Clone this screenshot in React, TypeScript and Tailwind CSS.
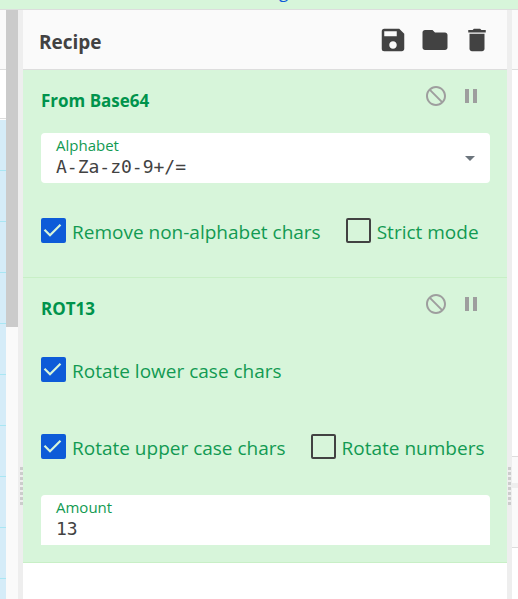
import { useId, type ReactNode } from "react";
import { MdDelete, MdFolder, MdNotInterested, MdPause, MdSave } from "react-icons/md";

function Gutter({ side }: { side: "start" | "end" }) {
  return (
    <div
      className={`flex w-[5px] shrink-0 flex-col bg-[#eeeeee] pt-[457px] ${side === "start" ? "items-end" : "items-center"}`}
    >
      <div className="flex flex-col gap-[2px]">
        {Array.from({ length: 8 }, (_, i) => (
          <span key={i} className="h-[3px] w-[3px] bg-[#cccccc]" />
        ))}
      </div>
    </div>
  );
}

function Checkbox({ label, checked = false }: { label: string; checked?: boolean }) {
  return (
    <label className="flex items-start gap-[6px] pt-[18px] pb-[15px]">
      <span className="grid size-[25px] shrink-0">
        <input
          type="checkbox"
          defaultChecked={checked}
          className="peer col-start-1 row-start-1 size-[25px] appearance-none rounded-[2px] border-2 border-[#424242] checked:border-[#0d5bd8] checked:bg-[#0d5bd8]"
        />
        <svg
          viewBox="0 0 25 25"
          className="pointer-events-none invisible col-start-1 row-start-1 size-[25px] peer-checked:visible"
          fill="none"
          stroke="#d7f5da"
          strokeWidth="2.2"
        >
          <path d="M3.5 11.8 9 17.3 19.5 6.7" />
        </svg>
      </span>
      <span className="pt-[2px] text-[19px] leading-[25px] whitespace-nowrap text-[#129a52]">{label}</span>
    </label>
  );
}

function Field({ label, value, dropdown = false }: { label: string; value: string; dropdown?: boolean }) {
  const id = useId();
  return (
    <div
      className={`mt-[2px] flex h-[50px] w-full bg-white pl-[15px] ${dropdown ? "rounded-[4px]" : "rounded-t-[4px]"}`}
    >
      <div className="flex min-w-0 flex-1 flex-col pt-[2px]">
        <label htmlFor={id} className="text-[15px] leading-[20px] text-[#129a52]">
          {label}
        </label>
        <input
          id={id}
          type="text"
          defaultValue={value}
          className="h-[24px] w-full bg-transparent font-['DejaVu_Sans_Mono',monospace] text-[18px] leading-[24px] text-[#424242] outline-none"
        />
      </div>
      {dropdown && (
        <button type="button" aria-label="Options" className="grid w-[40px] place-items-center">
          <svg viewBox="0 0 10 5" className="h-[5px] w-[10px]" fill="#6c757d">
            <path d="M0 0h10L5 5z" />
          </svg>
        </button>
      )}
    </div>
  );
}

function Operation({ name, children }: { name: string; children: ReactNode }) {
  return (
    <li className="border-b border-[#c8efc6] bg-[#d7f5da] pr-[17px] pb-[17px] pl-[18px]">
      <div className="flex h-[61px] items-start justify-between pr-[7px]">
        <h3 className="pt-[18px] text-[17px] leading-[25px] font-bold text-[#00934c]">{name}</h3>
        <div className="flex gap-[11px] pt-[14px] text-[#9e9e9e]">
          <button type="button" aria-label="Disable operation">
            <MdNotInterested className="size-6" />
          </button>
          <button type="button" aria-label="Set breakpoint">
            <MdPause className="size-6" />
          </button>
        </div>
      </div>
      <div className="flex flex-wrap gap-x-[25px] gap-y-[17px]">{children}</div>
    </li>
  );
}

export default function App() {
  return (
    <div className="flex h-screen flex-col overflow-hidden bg-white font-['Open_Sans',sans-serif]">
      <div className="flex h-[10px] shrink-0 items-end justify-center overflow-hidden border-b border-[#dddddd] bg-[#d7f5da] pl-[49px]">
        <a href="#" className="mb-[2px] h-[25px] text-[17px] leading-[20px] text-[#0d5bd8]">
          g
        </a>
      </div>

      <div className="flex min-h-0 flex-1">
        <div className="flex w-[6px] shrink-0 flex-col">
          <div className="h-[60px] shrink-0 border-b border-[#dddddd] bg-[#fafafa]" />
          <div className="mb-px h-[49px] shrink-0 border-b border-[#dddddd]" />
          {Array.from({ length: 10 }, (_, i) => (
            <div key={i} className="h-[51px] shrink-0 border-b border-[#a9e6f3] bg-[#d5ecf8]" />
          ))}
        </div>
        <div className="w-[12px] shrink-0 bg-[#fafafa]">
          <div className="h-[317px] bg-[#cbcbcb]" />
        </div>

        <Gutter side="start" />

        <main className="min-w-0 flex-1">
          <div className="flex h-[60px] items-center justify-between border-b border-[#dddddd] bg-[#fafafa] pr-[15px] pl-4 text-[#424242]">
            <h2 className="pt-[5px] text-[19px] leading-[25px] font-bold">Recipe</h2>
            <div className="flex gap-[12px]">
              <button type="button" aria-label="Save recipe">
                <MdSave className="size-[30px]" />
              </button>
              <button type="button" aria-label="Load recipe">
                <MdFolder className="size-[30px]" />
              </button>
              <button type="button" aria-label="Clear recipe">
                <MdDelete className="size-[30px]" />
              </button>
            </div>
          </div>
          <ul>
            <Operation name="From Base64">
              <Field label="Alphabet" value="A-Za-z0-9+/=" dropdown />
              <Checkbox label="Remove non-alphabet chars" checked />
              <Checkbox label="Strict mode" />
            </Operation>
            <Operation name="ROT13">
              <Checkbox label="Rotate lower case chars" checked />
              <Checkbox label="Rotate upper case chars" checked />
              <Checkbox label="Rotate numbers" />
              <Field label="Amount" value="13" />
            </Operation>
          </ul>
        </main>

        <Gutter side="end" />

        <div className="flex w-[6px] shrink-0 flex-col">
          <div className="h-[60px] shrink-0 border-b border-[#dddddd] bg-[#fafafa]" />
          <div className="h-[387px] shrink-0 border-b border-[#dddddd]" />
          <div className="h-[26px] shrink-0 bg-[#fafafa]" />
          <div className="h-[5px] shrink-0 bg-[#eeeeee]" />
          <div className="h-[60px] shrink-0 border-b border-[#dddddd] bg-[#fafafa]" />
        </div>
      </div>
    </div>
  );
}
